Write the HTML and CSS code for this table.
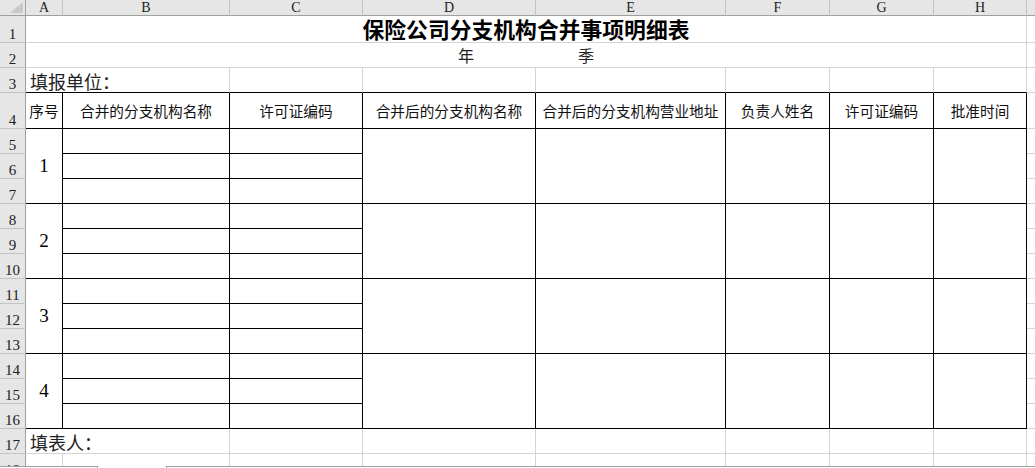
FILE: index.html
```html
<!DOCTYPE html>
<html lang="zh-CN">
<head>
<meta charset="utf-8">
<title>保险公司分支机构合并事项明细表</title>
<link rel="stylesheet" href="styles.css">
</head>
<body>
<div class="sheet">
  <div class="grid">
    <div class="corner"><svg class="tri" width="13" height="11" viewBox="0 0 13 11"><polygon points="13,0 13,11 0,11" fill="#c9c9c9"/></svg></div>
    <div class="ch">A</div>
    <div class="ch">B</div>
    <div class="ch">C</div>
    <div class="ch">D</div>
    <div class="ch">E</div>
    <div class="ch">F</div>
    <div class="ch">G</div>
    <div class="ch">H</div>
    <div class="ch ch-last"></div>

    <div class="rh">1</div>
    <div class="c span8 title">保险公司分支机构合并事项明细表</div>
    <div class="c ci"></div>

    <div class="rh">2</div>
    <div class="c span8 period"><span>年</span><span>季</span></div>
    <div class="c ci"></div>

    <div class="rh">3</div>
    <div class="c span2 bb label">填报单位：</div>
    <div class="c bb"></div>
    <div class="c bb"></div>
    <div class="c bb"></div>
    <div class="c bb"></div>
    <div class="c bb"></div>
    <div class="c bb"></div>
    <div class="c ci"></div>

    <div class="rh">4</div>
    <div class="c b head">序号</div>
    <div class="c b head">合并的分支机构名称</div>
    <div class="c b head">许可证编码</div>
    <div class="c b head">合并后的分支机构名称</div>
    <div class="c b head">合并后的分支机构营业地址</div>
    <div class="c b head">负责人姓名</div>
    <div class="c b head">许可证编码</div>
    <div class="c b head">批准时间</div>
    <div class="c ci"></div>

    <div class="rh">5</div>
    <div class="c b r3 seq">1</div>
    <div class="c b"></div>
    <div class="c b"></div>
    <div class="c b r3"></div>
    <div class="c b r3"></div>
    <div class="c b r3"></div>
    <div class="c b r3"></div>
    <div class="c b r3"></div>
    <div class="c ci"></div>
    <div class="rh">6</div>
    <div class="c b"></div>
    <div class="c b"></div>
    <div class="c ci"></div>
    <div class="rh">7</div>
    <div class="c b"></div>
    <div class="c b"></div>
    <div class="c ci"></div>

    <div class="rh">8</div>
    <div class="c b r3 seq">2</div>
    <div class="c b"></div>
    <div class="c b"></div>
    <div class="c b r3"></div>
    <div class="c b r3"></div>
    <div class="c b r3"></div>
    <div class="c b r3"></div>
    <div class="c b r3"></div>
    <div class="c ci"></div>
    <div class="rh">9</div>
    <div class="c b"></div>
    <div class="c b"></div>
    <div class="c ci"></div>
    <div class="rh">10</div>
    <div class="c b"></div>
    <div class="c b"></div>
    <div class="c ci"></div>

    <div class="rh">11</div>
    <div class="c b r3 seq">3</div>
    <div class="c b"></div>
    <div class="c b"></div>
    <div class="c b r3"></div>
    <div class="c b r3"></div>
    <div class="c b r3"></div>
    <div class="c b r3"></div>
    <div class="c b r3"></div>
    <div class="c ci"></div>
    <div class="rh">12</div>
    <div class="c b"></div>
    <div class="c b"></div>
    <div class="c ci"></div>
    <div class="rh">13</div>
    <div class="c b"></div>
    <div class="c b"></div>
    <div class="c ci"></div>

    <div class="rh">14</div>
    <div class="c b r3 seq">4</div>
    <div class="c b"></div>
    <div class="c b"></div>
    <div class="c b r3"></div>
    <div class="c b r3"></div>
    <div class="c b r3"></div>
    <div class="c b r3"></div>
    <div class="c b r3"></div>
    <div class="c ci"></div>
    <div class="rh">15</div>
    <div class="c b"></div>
    <div class="c b"></div>
    <div class="c ci"></div>
    <div class="rh">16</div>
    <div class="c b"></div>
    <div class="c b"></div>
    <div class="c ci"></div>

    <div class="rh">17</div>
    <div class="c span2 label">填表人：</div>
    <div class="c"></div>
    <div class="c"></div>
    <div class="c"></div>
    <div class="c"></div>
    <div class="c"></div>
    <div class="c"></div>
    <div class="c ci"></div>

    <div class="rh">18</div>
    <div class="c"></div>
    <div class="c"></div>
    <div class="c"></div>
    <div class="c"></div>
    <div class="c"></div>
    <div class="c"></div>
    <div class="c"></div>
    <div class="c"></div>
    <div class="c ci"></div>
  </div>
</div>
<div class="tabbar">
  <div class="tab-left"></div>
  <div class="tab-gap"></div>
  <div class="tab-right"></div>
</div>
</body>
</html>
```

FILE: styles.css
```css
* { box-sizing: border-box; }
html, body { margin: 0; padding: 0; background: #fff; }
body {
  width: 1035px;
  height: 468px;
  overflow: hidden;
  font-family: "Noto Sans CJK SC", "Noto Sans", sans-serif;
  color: #000;
}
.sheet { height: 466px; overflow: hidden; }
.grid {
  display: grid;
  grid-template-columns: 26px 37px 167px 133px 173px 190px 104px 104px 93px 8px;
  grid-template-rows: 16px 27px 25px 25px 36px repeat(13, 25px) 25px;
}
.corner {
  background: #e6e6e6;
  border-right: 1px solid #9f9f9f;
  border-bottom: 1px solid #9f9f9f;
  position: relative;
}
.tri { position: absolute; right: 2px; bottom: 2px; display: block; }
.ch {
  background: #e6e6e6;
  border-right: 1px solid #c3c3c3;
  border-bottom: 1px solid #9f9f9f;
  font-family: "Liberation Serif", serif;
  font-size: 14px;
  line-height: 15px;
  text-align: center;
  color: #222;
}
.ch-last { border-right: none; }
.rh {
  background: #e6e6e6;
  border-right: 1px solid #9f9f9f;
  border-bottom: 1px solid #c3c3c3;
  font-family: "Liberation Serif", serif;
  font-size: 15px;
  line-height: 15px;
  color: #222;
  display: flex;
  align-items: flex-end;
  justify-content: center;
  overflow: hidden;
}
.c {
  border-right: 1px solid #d4d4d4;
  border-bottom: 1px solid #d4d4d4;
  display: flex;
  align-items: center;
  justify-content: center;
  overflow: hidden;
  white-space: nowrap;
}
.ci { border-right: none; }
.b { border-right-color: #000; border-bottom-color: #000; }
.bb { border-bottom-color: #000; }
.span8 { grid-column: span 8; }
.span2 { grid-column: span 2; }
.r3 { grid-row: span 3; }
.title {
  font-size: 21.8px;
  font-weight: 700;
  line-height: 22px;
  overflow: visible;
}
.period {
  gap: 104px;
  font-size: 16px;
  line-height: 20px;
  color: #222;
}
.label {
  justify-content: flex-start;
  padding-left: 4px;
  padding-top: 2px;
  font-size: 18px;
  line-height: 20px;
  color: #222;
}
.head {
  font-size: 14.67px;
  line-height: 18px;
  color: #111;
}
.seq {
  font-family: "Liberation Serif", serif;
  font-size: 19px;
  line-height: 20px;
}
.tabbar { display: flex; height: 2px; }
.tab-left { width: 98px; border-top: 1px solid #a0a0a0; border-right: 1px solid #a0a0a0; }
.tab-gap { width: 68px; }
.tab-right { flex: 1; border-top: 1px solid #a0a0a0; border-left: 1px solid #a0a0a0; }
```
